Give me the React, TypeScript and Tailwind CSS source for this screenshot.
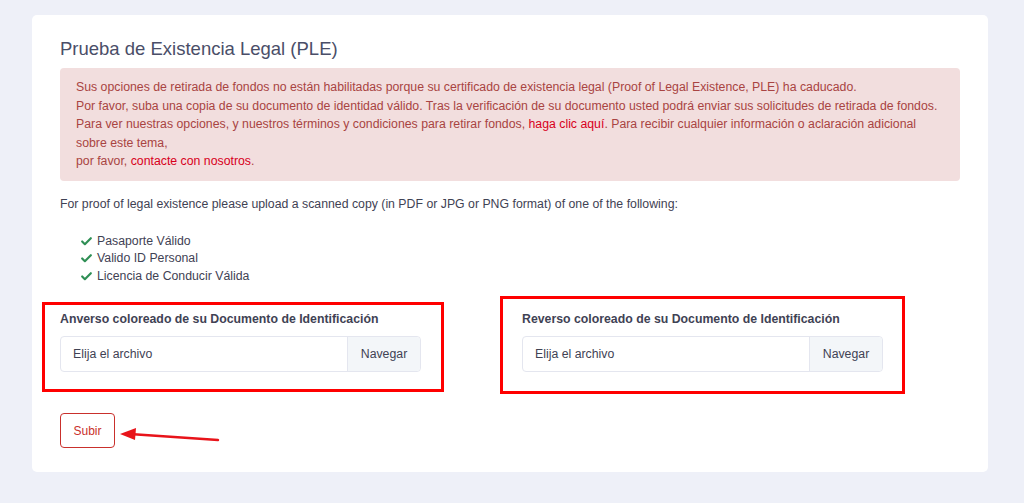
import { Check } from "lucide-react";

const font = { fontFamily: '"Liberation Sans", Arial, sans-serif' };

function FileField({ label }: { label: string }) {
  return (
    <div className="w-[361px]">
      <div className="text-[12.3px] font-bold text-[#3f4254] leading-[18px]">{label}</div>
      <div className="mt-[8px] flex h-[36px] rounded-[4px] border border-[#e4e6ef] bg-white text-[12.3px] text-[#3f4254]">
        <div className="flex flex-1 items-center pl-[12px]">Elija el archivo</div>
        <div className="flex w-[73px] items-center justify-center rounded-r-[4px] border-l border-[#e4e6ef] bg-[#f3f6f9]">
          Navegar
        </div>
      </div>
    </div>
  );
}

export default function App() {
  return (
    <div className="h-[503px] w-[1024px] overflow-hidden bg-[#eef0f8] pt-[15px] pl-[32px]" style={font}>
      <div className="relative h-[457px] w-[956px] rounded-[5px] bg-white px-[28px] pt-[22px]">
        <h2 className="text-[18.5px] leading-[24px] text-[#4a4e68]">Prueba de Existencia Legal (PLE)</h2>

        <div className="mt-[7px] rounded-[4px] bg-[#f2dede] px-[16px] py-[10px] text-[12.3px] leading-[18.5px] text-[#a94442]">
          Sus opciones de retirada de fondos no están habilitadas porque su certificado de existencia legal (Proof of Legal Existence, PLE) ha caducado.
          <br />
          Por favor, suba una copia de su documento de identidad válido. Tras la verificación de su documento usted podrá enviar sus solicitudes de retirada de fondos.
          <br />
          Para ver nuestras opciones, y nuestros términos y condiciones para retirar fondos,{" "}
          <span className="text-[#d8001c]">haga clic aquí</span>. Para recibir cualquier información o aclaración adicional
          <br />
          sobre este tema,
          <br />
          por favor, <span className="text-[#d8001c]">contacte con nosotros</span>.
        </div>

        <p className="mt-[14px] text-[12.3px] leading-[18px] text-[#3f4254]">
          For proof of legal existence please upload a scanned copy (in PDF or JPG or PNG format) of one of the following:
        </p>

        <ul className="mt-[20px] pl-[20px] text-[12.3px] leading-[17.5px] text-[#3f4254]">
          {["Pasaporte Válido", "Valido ID Personal", "Licencia de Conducir Válida"].map((t) => (
            <li key={t} className="flex items-center gap-[4px]">
              <Check size={13} strokeWidth={4} className="text-[#2f8f55]" />
              {t}
            </li>
          ))}
        </ul>

        <div className="mt-[25px] flex gap-[101px]">
          <div className="relative">
            <FileField label="Anverso coloreado de su Documento de Identificación" />
            <div className="pointer-events-none absolute left-[-18px] top-[-8px] h-[90px] w-[402px] border-[3px] border-[#ff0000]" />
          </div>
          <div className="relative">
            <FileField label="Reverso coloreado de su Documento de Identificación" />
            <div className="pointer-events-none absolute left-[-22px] top-[-14px] h-[98px] w-[405px] border-[3px] border-[#ff0000]" />
          </div>
        </div>

        <div className="relative mt-[41px]">
          <button
            type="button"
            className="flex h-[35px] w-[55px] items-center justify-center rounded-[4px] border border-[#c9302c] text-[12px] text-[#c9302c]"
          >
            Subir
          </button>
          <svg className="absolute left-[56px] top-[12px]" width="110" height="20" viewBox="0 0 110 20">
            <line x1="102" y1="15" x2="14" y2="9" stroke="#e8141a" strokeWidth="2.5" strokeLinecap="round" />
            <polygon points="4,9 20,3 19,15" fill="#e8141a" />
          </svg>
        </div>
      </div>
    </div>
  );
}
